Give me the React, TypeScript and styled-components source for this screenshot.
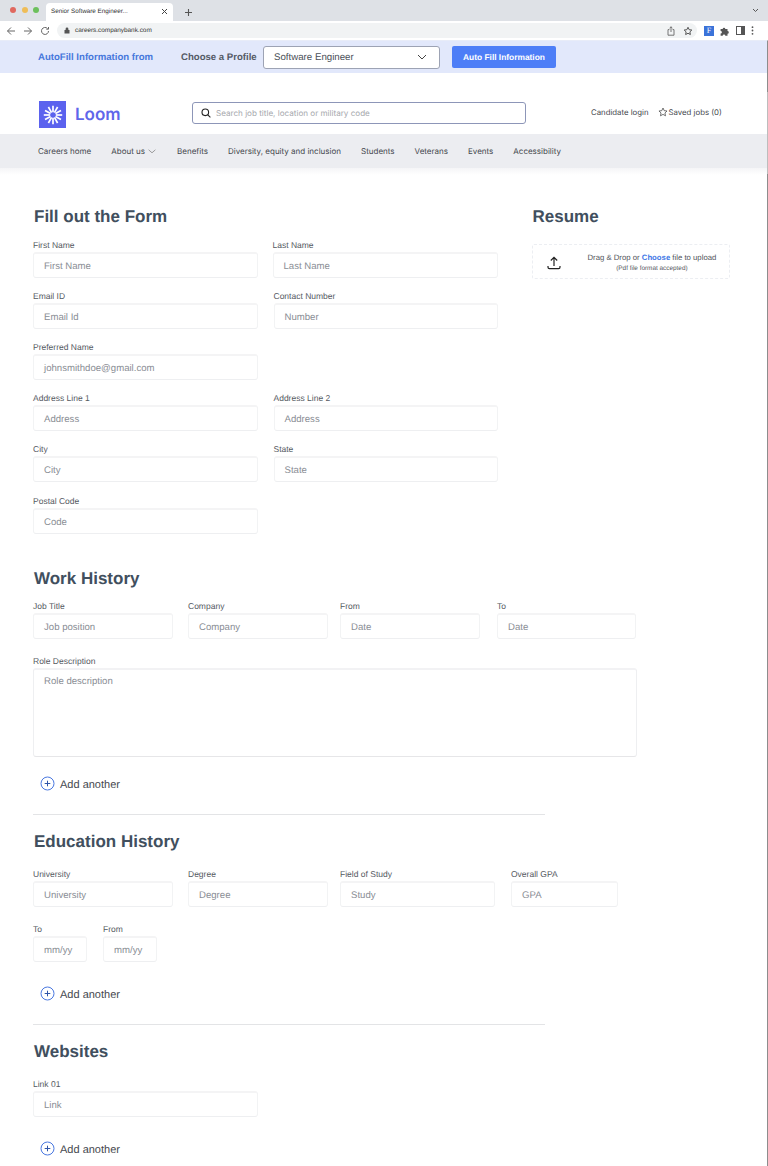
import React from "react";
import styled, { createGlobalStyle } from "styled-components";

const GlobalStyle = createGlobalStyle`
    html, body { margin: 0; padding: 0; background: #fff; }
    body { font-family: "Liberation Sans", Arial, sans-serif; text-rendering: geometricPrecision; }
    * { box-sizing: border-box; }
`;

type FieldT = { label: string; placeholder: string; width: number; left?: number };

const workRow: FieldT[] = [
    { label: "Job Title", placeholder: "Job position", width: 140 },
    { label: "Company", placeholder: "Company", width: 140, left: 15 },
    { label: "From", placeholder: "Date", width: 140, left: 12 },
    { label: "To", placeholder: "Date", width: 139, left: 17 },
];

const eduRow: FieldT[] = [
    { label: "University", placeholder: "University", width: 140 },
    { label: "Degree", placeholder: "Degree", width: 140, left: 15 },
    { label: "Field of Study", placeholder: "Study", width: 155, left: 12 },
    { label: "Overall GPA", placeholder: "GPA", width: 107, left: 16 },
];

const navItems = ["Careers home", "About us", "Benefits", "Diversity, equity and inclusion", "Students", "Veterans", "Events", "Accessibility"];

function Field({ label, placeholder, width, left }: FieldT) {
    return (
        <FieldBox $width={width} $left={left}>
            <FieldLabel>{label}</FieldLabel>
            <InputBox>{placeholder}</InputBox>
        </FieldBox>
    );
}

function AddAnother({ top }: { top: number }) {
    return (
        <AddRow $top={top}>
            <svg width="15" height="15" viewBox="0 0 15 15" fill="none" stroke="#4a78e0" strokeWidth="1">
                <circle cx="7.5" cy="7.5" r="6.5" />
                <path d="M7.5 4.7v5.6M4.7 7.5h5.6" stroke="#2f55a8" />
            </svg>
            <AddText>Add another</AddText>
        </AddRow>
    );
}

function LoomMark() {
    const spokes = [0, 30, 60, 90, 120, 150, 180, 210, 240, 270, 300, 330];
    return (
        <LogoBox>
            <svg width="20" height="20" viewBox="0 0 20 20" stroke="#fff" strokeWidth="1.7">
                {spokes.map((a) => (
                    <line key={a} x1="10" y1="7.2" x2="10" y2="0.8" transform={`rotate(${a} 10 10)`} />
                ))}
            </svg>
        </LogoBox>
    );
}

export default function App() {
    return (
        <Page>
            <GlobalStyle />
            <TabStrip>
                <Lights>
                    <Light $color="#e0685f" />
                    <Light $color="#efbd58" />
                    <Light $color="#6dc05c" />
                </Lights>
                <Tab>
                    <span>Senior Software Engineer...</span>
                    <svg width="7" height="7" viewBox="0 0 7 7" stroke="#444" strokeWidth="1"><path d="M1 1l5 5M6 1l-5 5" /></svg>
                </Tab>
                <svg width="9" height="9" viewBox="0 0 9 9" stroke="#555" strokeWidth="1.1"><path d="M4.5 1v7M1 4.5h7" /></svg>
                <TabChevron>
                    <svg width="7" height="5" viewBox="0 0 7 5" fill="none" stroke="#555" strokeWidth="1"><path d="M1 1l2.5 2.5L6 1" /></svg>
                </TabChevron>
            </TabStrip>
            <Toolbar>
                <NavIcons>
                    <svg width="10" height="10" viewBox="0 0 10 10" fill="none" stroke="#666" strokeWidth="1"><path d="M9 5H1.5M5 1.5L1.5 5 5 8.5" /></svg>
                    <svg width="10" height="10" viewBox="0 0 10 10" fill="none" stroke="#666" strokeWidth="1"><path d="M1 5h7.5M5 1.5L8.5 5 5 8.5" /></svg>
                    <svg width="10" height="10" viewBox="0 0 10 10" fill="none" stroke="#666" strokeWidth="1"><path d="M8.5 5a3.5 3.5 0 1 1-1-2.5M8.5 1v2.2H6.3" /></svg>
                </NavIcons>
                <Omnibox>
                    <svg width="6" height="7" viewBox="0 0 6 7"><path d="M1.6 3V2a1.4 1.4 0 0 1 2.8 0v1H5.5v3.6h-5V3z" fill="#555" /></svg>
                    <UrlText>careers.companybank.com</UrlText>
                    <OmniIcons>
                        <svg width="8" height="10" viewBox="0 0 8 10" fill="none" stroke="#666" strokeWidth="0.9"><path d="M2.4 3.6H1v5.6h6V3.6H5.6M4 6V.8M2.6 2.1L4 .8l1.4 1.3" /></svg>
                        <svg width="10" height="10" viewBox="0 0 24 24" fill="none" stroke="#555" strokeWidth="2.4"><path d="M12 3l2.8 5.9 6.4.8-4.7 4.4 1.2 6.4L12 17.4l-5.7 3.1 1.2-6.4-4.7-4.4 6.4-.8z" /></svg>
                    </OmniIcons>
                </Omnibox>
                <ExtIcons>
                    <ExtBadge>F</ExtBadge>
                    <svg width="10" height="10" viewBox="0 0 10 10"><path d="M.6 3h2.100a1.300 1.300 0 0 1 2.600 0h2.200v2.100a1.300 1.300 0 0 1 0 2.600v2H5.300a1.300 1.300 0 0 0-2.600 0H.6V7.600a1.300 1.300 0 0 0 0-2.600z" fill="#555" /></svg>
                    <svg width="9" height="9" viewBox="0 0 9 9"><rect x=".5" y=".5" width="8" height="8" fill="none" stroke="#555" /><rect x="5" y="1" width="3" height="7" fill="#555" /></svg>
                    <svg width="3" height="9" viewBox="0 0 3 9" fill="#555"><circle cx="1.500" cy="1.200" r="0.900" /><circle cx="1.500" cy="4.500" r="0.900" /><circle cx="1.500" cy="7.800" r="0.900" /></svg>
                </ExtIcons>
            </Toolbar>
            <Banner>
                <BannerLead>AutoFill Information from</BannerLead>
                <BannerLabel>Choose a Profile</BannerLabel>
                <ProfileSelect>
                    <span>Software Engineer</span>
                    <svg width="10" height="6" viewBox="0 0 10 6" fill="none" stroke="#444" strokeWidth="1"><path d="M1 1l4 4 4-4" /></svg>
                </ProfileSelect>
                <FillButton>Auto Fill Information</FillButton>
            </Banner>
            <Site>
                <Header>
                    <Brand>
                        <LoomMark />
                        <BrandName>Loom</BrandName>
                    </Brand>
                    <SearchBox>
                        <svg width="10" height="10" viewBox="0 0 10 10" fill="none" stroke="#222" strokeWidth="1.1"><circle cx="4.300" cy="4.300" r="3.300" /><path d="M6.800 6.800L9.400 9.400" /></svg>
                        <span>Search job title, location or military code</span>
                    </SearchBox>
                    <HeaderLinks>
                        <span>Candidate login</span>
                        <SavedJobs>
                            <svg width="10" height="10" viewBox="0 0 24 24" fill="none" stroke="#444" strokeWidth="1.800"><path d="M12 2.500l2.900 6.300 6.800.8-5 4.700 1.300 6.800L12 17.700l-6 3.400 1.300-6.800-5-4.700 6.800-.8z" /></svg>
                            Saved jobs (0)
                        </SavedJobs>
                    </HeaderLinks>
                </Header>
                <NavBar>
                    {navItems.map((item) => (
                        <NavItem key={item}>
                            {item}
                            {item === "About us" && (
                                <svg width="9" height="5" viewBox="0 0 9 5" fill="none" stroke="#777" strokeWidth="0.7"><path d="M.6.800l3.400 3 3.400-3" /></svg>
                            )}
                        </NavItem>
                    ))}
                </NavBar>
                <NavShade />
                <Content>
                    <TopSplit>
                        <div>
                            <Heading $top={30}>Fill out the Form</Heading>
                            <Row $top={11} $gap={14.5}>
                                <Field label="First Name" placeholder="First Name" width={225} />
                                <Field label="Last Name" placeholder="Last Name" width={225} />
                            </Row>
                            <Row $top={11} $gap={15.5}>
                                <Field label="Email ID" placeholder="Email Id" width={225} />
                                <Field label="Contact Number" placeholder="Number" width={224} />
                            </Row>
                            <Row $top={11}>
                                <Field label="Preferred Name" placeholder="johnsmithdoe@gmail.com" width={225} />
                            </Row>
                            <Row $top={11} $gap={15.5}>
                                <Field label="Address Line 1" placeholder="Address" width={225} />
                                <Field label="Address Line 2" placeholder="Address" width={224} />
                            </Row>
                            <Row $top={11} $gap={15.5}>
                                <Field label="City" placeholder="City" width={225} />
                                <Field label="State" placeholder="State" width={224} />
                            </Row>
                            <Row $top={12}>
                                <Field label="Postal Code" placeholder="Code" width={225} />
                            </Row>
                        </div>
                        <ResumeColumn>
                            <Heading $top={30}>Resume</Heading>
                            <DropZone>
                                <svg width="14" height="14" viewBox="0 0 14 14" fill="none" stroke="#222" strokeWidth="1.200"><path d="M7 10V1.500M3.800 4.500L7 1.300l3.200 3.200M1 10v1.300c0 .9.600 1.400 1.400 1.400h9.200c.8 0 1.400-.5 1.400-1.400V10" /></svg>
                                <DropText>
                                    <span>Drag &amp; Drop or <ChooseLink>Choose</ChooseLink> file to upload</span>
                                    <DropHint>(Pdf file format accepted)</DropHint>
                                </DropText>
                            </DropZone>
                        </ResumeColumn>
                    </TopSplit>

                    <Heading $top={33}>Work History</Heading>
                    <Row $top={10}>
                        {workRow.map((f) => <Field key={f.label} {...f} />)}
                    </Row>
                    <Row $top={15}>
                        <FieldBox $width={604}>
                            <FieldLabel>Role Description</FieldLabel>
                            <TextAreaBox>Role description</TextAreaBox>
                        </FieldBox>
                    </Row>
                    <AddAnother top={19} />
                    <Divider $top={23} />

                    <Heading $top={15}>Education History</Heading>
                    <Row $top={15}>
                        {eduRow.map((f) => <Field key={f.label} {...f} />)}
                    </Row>
                    <Row $top={15} $gap={16}>
                        <Field label="To" placeholder="mm/yy" width={54} />
                        <Field label="From" placeholder="mm/yy" width={54} />
                    </Row>
                    <AddAnother top={24} />
                    <Divider $top={23} />

                    <Heading $top={15}>Websites</Heading>
                    <Row $top={15}>
                        <Field label="Link 01" placeholder="Link" width={225} />
                    </Row>
                    <AddAnother top={24} />
                </Content>
            </Site>
        </Page>
    );
}

const Page = styled.div`
    width: 768px;
    height: 1166px;
    overflow: hidden;
    background: #fff;
`;
const TabStrip = styled.div`
    height: 21px;
    background: #dee1e6;
    display: flex;
    align-items: flex-end;
    padding-left: 10px;
    svg { flex: none; }
    > svg { margin: 0 0 4px 11px; }
`;
const Lights = styled.div`
    display: flex;
    gap: 5.500px;
    align-self: flex-start;
    margin-top: 7px;
    margin-right: 7px;
`;
const Light = styled.i<{ $color: string }>`
    display: block;
    width: 6px;
    height: 6px;
    border-radius: 50%;
    background: ${(p) => p.$color};
`;
const Tab = styled.div`
    width: 127px;
    height: 18px;
    background: #fff;
    border-radius: 4px 4px 0 0;
    display: flex;
    align-items: center;
    justify-content: space-between;
    padding: 0 5px 2px 5px;
    font-size: 6.300px;
    color: #333;
`;
const TabChevron = styled.div`
    margin-left: auto;
    margin-right: 9px;
    align-self: center;
    display: flex;
`;
const Toolbar = styled.div`
    height: 19px;
    background: #fff;
    display: flex;
    align-items: center;
    padding: 0 10px 0 6px;
`;
const NavIcons = styled.div`
    display: flex;
    gap: 7px;
    width: 51px;
`;
const Omnibox = styled.div`
    width: 640px;
    height: 15px;
    border-radius: 8px;
    background: #f1f3f4;
    display: flex;
    align-items: center;
    padding: 0 4px 0 7px;
`;
const UrlText = styled.span`
    font-size: 6.400px;
    color: #333;
    margin-left: 5px;
`;
const OmniIcons = styled.div`
    margin-left: auto;
    display: flex;
    align-items: center;
    gap: 8px;
`;
const ExtIcons = styled.div`
    display: flex;
    align-items: center;
    gap: 6px;
    margin-left: 7px;
`;
const ExtBadge = styled.span`
    width: 10px;
    height: 10px;
    background: #3b73d9;
    color: #fff;
    font-family: "Liberation Serif", serif;
    font-size: 8px;
    line-height: 10px;
    text-align: center;
`;
const Site = styled.div`
    border-right: 1px solid;
    border-image: linear-gradient(#8d8d8d 20px, #bdbdbd 20px, #bdbdbd 102px, #8d8d8d 102px) 1;
    height: 1093px;
`;
const Banner = styled.div`
    height: 33px;
    background: #e2e8fb;
    border-top: 1px solid #e8ecf8;
    border-right: 1px solid #8d8d8d;
    display: flex;
    align-items: center;
    padding: 1px 0 0 38px;
`;
const BannerLead = styled.span`
    font-size: 9.600px;
    font-weight: 700;
    color: #4677dc;
    width: 143px;
`;
const BannerLabel = styled.span`
    font-size: 9.600px;
    font-weight: 700;
    color: #545a66;
    width: 82px;
`;
const ProfileSelect = styled.div`
    width: 177px;
    height: 23px;
    margin-top: -1px;
    background: #fff;
    border: 1px solid #9da3b4;
    border-radius: 3px;
    display: flex;
    align-items: center;
    justify-content: space-between;
    padding: 0 12px 0 10px;
    font-size: 9.700px;
    color: #4a4f58;
`;
const FillButton = styled.div`
    margin: -1px 0 0 12px;
    width: 104px;
    height: 22px;
    border-radius: 2px;
    background: #4d7ef7;
    color: #fff;
    font-size: 8.400px;
    font-weight: 700;
    display: flex;
    align-items: center;
    justify-content: center;
`;
const Header = styled.div`
    height: 61px;
    display: flex;
    align-items: center;
    padding: 18px 0 0 39px;
`;
const Brand = styled.div`
    display: flex;
    align-items: center;
    gap: 9px;
    width: 153px;
    margin-top: 4px;
`;
const LogoBox = styled.div`
    width: 27px;
    height: 27px;
    background: #5b62ee;
    display: flex;
    align-items: center;
    justify-content: center;
`;
const BrandName = styled.span`
    font-family: Inter, sans-serif;
    font-size: 17px;
    font-weight: 600;
    color: #5f66ea;
`;
const SearchBox = styled.div`
    width: 334px;
    height: 22px;
    border: 1px solid #8d96b8;
    border-radius: 3px;
    display: flex;
    align-items: center;
    gap: 5px;
    padding-left: 8px;
    font-family: Inter, sans-serif;
    font-size: 8.100px;
    color: #a6a8ad;
`;
const HeaderLinks = styled.div`
    display: flex;
    align-items: center;
    gap: 9px;
    margin-left: 65px;
    font-family: Inter, sans-serif;
    font-size: 7.800px;
    color: #44474d;
    margin-top: -1px;
`;
const SavedJobs = styled.span`
    display: flex;
    align-items: center;
    gap: 1px;
`;
const NavBar = styled.div`
    height: 34px;
    background: #ecedf1;
    display: flex;
    align-items: center;
    gap: 20px;
    padding-left: 38px;
`;
const NavItem = styled.span`
    display: flex;
    align-items: center;
    gap: 3px;
    font-family: Inter, sans-serif;
    font-size: 8px;
    color: #44474d;
`;
const NavShade = styled.div`
    height: 7px;
    background: linear-gradient(#f5f5f7, #fff);
`;
const Content = styled.div`
    padding-left: 33px;
`;
const TopSplit = styled.div`
    display: flex;
`;
const ResumeColumn = styled.div`
    margin-left: 34px;
`;
const Heading = styled.h2<{ $top: number }>`
    margin: ${(p) => p.$top}px 0 -1px;
    padding: 1px 0 0 1px;
    font-size: 17px;
    line-height: 22px;
    font-weight: 700;
    color: #414f5e;
`;
const Row = styled.div<{ $top: number; $gap?: number }>`
    display: flex;
    margin-top: ${(p) => p.$top}px;
    gap: ${(p) => p.$gap ?? 0}px;
`;
const FieldBox = styled.div<{ $width: number; $left?: number }>`
    width: ${(p) => p.$width}px;
    margin-left: ${(p) => p.$left ?? 0}px;
    flex: none;
`;
const FieldLabel = styled.div`
    font-size: 8.500px;
    line-height: 14px;
    color: #55595f;
`;
const InputBox = styled.div`
    height: 26px;
    border: 1px solid #f2f3f4;
    border-bottom-color: #eeeff1;
    border-top: 2px solid #f4f4f5;
    border-radius: 3px;
    padding: 2px 0 0 10px;
    display: flex;
    align-items: center;
    font-size: 9.600px;
    color: #8a8e95;
`;
const TextAreaBox = styled.div`
    height: 89px;
    border: 1px solid #eeeff1;
    border-bottom-color: #e6e6e8;
    border-top: 2px solid #f2f2f4;
    border-radius: 3px;
    padding: 6px 10px;
    font-size: 9.600px;
    line-height: 12px;
    color: #8a8e95;
`;
const AddRow = styled.div<{ $top: number }>`
    display: flex;
    align-items: center;
    gap: 5px;
    height: 15px;
    margin: ${(p) => p.$top}px 0 0 7px;
    font-size: 11px;
    color: #46494f;
`;
const AddText = styled.span`
    padding-top: 2px;
`;
const Divider = styled.div<{ $top: number }>`
    width: 512px;
    height: 1px;
    background: #e3e4e6;
    margin-top: ${(p) => p.$top}px;
`;
const DropZone = styled.div`
    width: 198px;
    height: 35px;
    margin-top: 17px;
    border: 1px dashed #eceef2;
    border-radius: 2px;
    display: flex;
    align-items: center;
    padding: 2px 0 0 14px;
`;
const DropText = styled.div`
    display: flex;
    flex-direction: column;
    align-items: center;
    margin-left: 27px;
    font-size: 7.750px;
    color: #53565c;
    gap: 3px;
    white-space: nowrap;
`;
const ChooseLink = styled.span`
    color: #3f78e6;
    font-weight: 700;
`;
const DropHint = styled.span`
    font-size: 6.400px;
`;
